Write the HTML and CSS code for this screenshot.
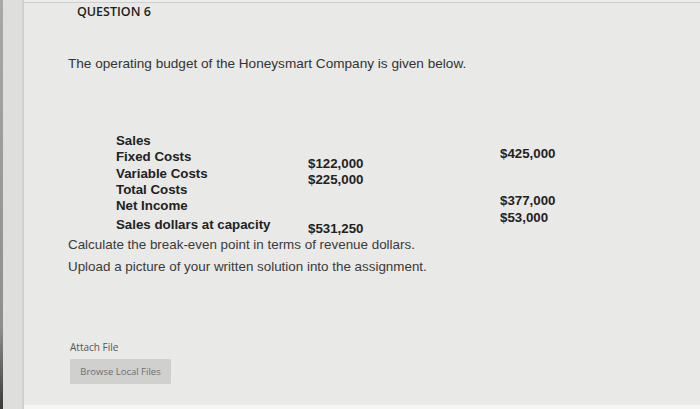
FILE: index.html
```html
<!DOCTYPE html>
<html>
<head>
<meta charset="utf-8">
<link rel="stylesheet" href="styles.css">
</head>
<body>
<div class="screen">
  <div class="edge"></div>
  <div class="rail"></div>
  <div class="panel">
    <div class="topline"></div>
    <div class="content">
      <h2 class="qtitle">QUESTION 6</h2>
      <p class="intro">The operating budget of the Honeysmart Company is given below.</p>
      <div class="budget">
        <div class="labels">
          <div>Sales</div>
          <div>Fixed Costs</div>
          <div>Variable Costs</div>
          <div>Total Costs</div>
          <div>Net Income</div>
          <div class="last">Sales dollars at capacity</div>
        </div>
        <div class="mid">
          <div>$122,000</div>
          <div>$225,000</div>
          <div class="cap">$531,250</div>
        </div>
        <div class="right">
          <div>$425,000</div>
          <div class="tc">$377,000</div>
          <div>$53,000</div>
        </div>
      </div>
      <p class="task">Calculate the break-even point in terms of revenue dollars.</p>
      <p class="task2">Upload a picture of your written solution into the assignment.</p>
      <div class="attach">
        <div class="attach-label">Attach File</div>
        <button class="browse">Browse Local Files</button>
      </div>
    </div>
    <div class="bottomline"></div>
  </div>
</div>
</body>
</html>
```

FILE: styles.css
```css
html, body {
  margin: 0;
  padding: 0;
  width: 700px;
  height: 409px;
  overflow: hidden;
  background: #e8e8e6;
}
.screen {
  display: flex;
  width: 700px;
  height: 409px;
}
.edge {
  width: 3px;
  background: linear-gradient(to bottom, #a8a8a6, #8e8e8c 80%, #3a3a3a);
}
.rail {
  width: 19px;
  background: #dededc;
  border-right: 2px solid #d0d0ce;
}
.panel {
  flex: 1;
  display: flex;
  flex-direction: column;
  background: #e9e9e7;
}
.topline {
  height: 2px;
  background: #ececea;
  border-bottom: 1px solid #cfcfcd;
}
.content {
  flex: 1;
  padding-left: 44px;
  font-family: "Liberation Sans", Arial, sans-serif;
  color: #3a3a3a;
}
.qtitle {
  margin: 0;
  padding-top: 1px;
  padding-left: 9px;
  font-family: "Open Sans", sans-serif;
  font-weight: 600;
  font-size: 12.5px;
  line-height: 16px;
  color: #1e1e1e;
}
.intro {
  margin: 36px 0 0 0;
  font-size: 13.6px;
  line-height: 16px;
  color: #333;
}
.budget {
  display: flex;
  margin-top: 61px;
  font-weight: bold;
  font-size: 13.3px;
  line-height: 16.3px;
  color: #222;
}
.labels {
  padding-left: 48px;
  width: 192px;
}
.labels .last {
  margin-top: 3px;
}
.mid {
  width: 192px;
  padding-top: 23px;
}
.mid .cap {
  margin-top: 32px;
}
.right {
  padding-top: 13px;
}
.right .tc {
  margin-top: 31px;
}
.task {
  margin: 0;
  font-size: 13.4px;
  line-height: 16px;
  color: #3a3a3a;
}
.task2 {
  margin: 6px 0 0 0;
  font-size: 13.4px;
  line-height: 16px;
  color: #3a3a3a;
}
.attach {
  margin-top: 65px;
  padding-left: 2px;
  display: flex;
  flex-direction: column;
  align-items: flex-start;
}
.attach-label {
  font-family: "Open Sans", sans-serif;
  font-size: 10px;
  line-height: 14px;
  color: #555;
}
.browse {
  margin-top: 5px;
  width: 101px;
  height: 25px;
  border: none;
  border-radius: 1px;
  background: #d0d0ce;
  font-family: "Open Sans", sans-serif;
  font-size: 9.5px;
  color: #6e6e6e;
  padding: 0;
}
.bottomline {
  height: 4px;
  background: #f6f6f4;
}
```
